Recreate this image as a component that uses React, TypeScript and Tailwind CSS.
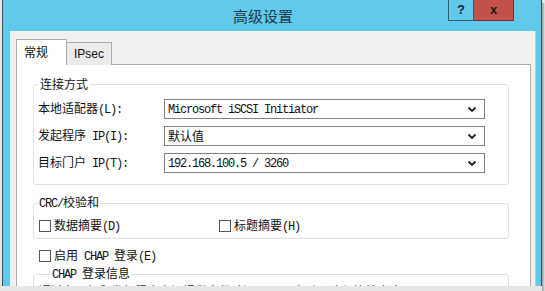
import React from "react";

const M = ({ children }: { children: React.ReactNode }) => (
  <span className="font-['Liberation_Mono',monospace] text-[12px] tracking-[-1.2px]">{children}</span>
);

const Chevron = () => (
  <svg width="10" height="7" viewBox="0 0 10 7">
    <path d="M1.5 1.5 L5 5 L8.5 1.5" fill="none" stroke="#222" strokeWidth="1.8" />
  </svg>
);

const Combo = ({ children }: { children: React.ReactNode }) => (
  <div className="h-[20px] w-[321px] border border-[#828282] bg-white flex items-center justify-between pl-[3px] pr-[7px]">
    <div className="leading-[18px] text-[#111] whitespace-pre">{children}</div>
    <Chevron />
  </div>
);

const Check = ({ children }: { children: React.ReactNode }) => (
  <div className="flex items-center h-[16px]">
    <div className="w-[12px] h-[12px] border border-[#555] bg-white mr-[3px]" />
    <span className="text-[#111] whitespace-pre">{children}</span>
  </div>
);

export default function App() {
  return (
    <div className="w-[545px] h-[291px] overflow-hidden bg-[#e6e6e6] font-['Noto_Sans_CJK_SC',sans-serif] text-[12px] leading-[16px] flex">
      <div className="flex flex-col ml-[2px] w-[543px]">
        <div className="flex">
          {/* window */}
          <div className="w-[540px] h-[286px] border-l border-r border-[#3b4a52] bg-[#61c9e9] flex flex-col">
            {/* title bar */}
            <div className="h-[31px] flex items-start shrink-0">
              <div className="flex-1 text-center pl-[75px] pt-[6px] text-[15px] leading-[20px] text-[#1d3a4c]">高级设置</div>
              <div className="w-[26px] h-[21px] border-l border-b border-r border-[#3e5d6c] flex items-center justify-center font-['Liberation_Sans',sans-serif] font-bold text-[13px] text-[#1a2a33]">?</div>
              <div className="w-[40px] h-[21px] bg-[#c5514b] border-b border-r border-[#6e3330] flex items-center justify-center font-['Liberation_Sans',sans-serif] font-bold text-[13px] text-[#1a1a1a]">x</div>
              <div className="w-[27px]" />
            </div>
            {/* client */}
            <div className="ml-[7px] w-[526px] flex-1 bg-[#f0f0f0] overflow-hidden border-r border-[#c8c8c8] pl-[6px] pt-[8px]">
              {/* tabs */}
              <div className="flex items-end h-[26px]">
                <div className="w-[51px] h-[26px] border-t border-l border-r border-[#adadad] bg-white pl-[7px] pt-[4px] relative z-10 text-[#111]">常规</div>
                <div className="w-[45px] h-[23px] border-t border-r border-[#adadad] bg-[#ececec] pl-[7px] pt-[3px] font-['Liberation_Sans',sans-serif] text-[12px] text-[#111]">IPsec</div>
              </div>
              {/* panel */}
              <div className="-mt-px w-[515px] h-[240px] border border-[#adadad] bg-white pl-[16px] pt-[11px]">
                <fieldset className="w-[476px] border border-[#dbe1e7] rounded-[3px] pl-[4px] pt-[7px] pb-[11px]">
                  <legend className="px-[2px] text-[#111]">连接方式</legend>
                  <div className="flex flex-col gap-[7px]">
                    <div className="flex items-center">
                      <div className="w-[126px] text-[#111] whitespace-pre">本地适配器<M>(L):</M></div>
                      <Combo><M>Microsoft iSCSI Initiator</M></Combo>
                    </div>
                    <div className="flex items-center">
                      <div className="w-[126px] text-[#111] whitespace-pre">发起程序<M> IP(I):</M></div>
                      <Combo>默认值</Combo>
                    </div>
                    <div className="flex items-center">
                      <div className="w-[126px] text-[#111] whitespace-pre">目标门户<M> IP(T):</M></div>
                      <Combo><M>192.168.100.5 / 3260</M></Combo>
                    </div>
                  </div>
                </fieldset>
                <fieldset className="mt-[9px] w-[476px] border border-[#dbe1e7] rounded-[3px] pl-[5px] pt-[6px] pb-[4px]">
                  <legend className="-ml-[1px] px-[1px] text-[#111]"><M>CRC/</M>校验和</legend>
                  <div className="flex">
                    <div className="w-[180px]"><Check>数据摘要<M>(D)</M></Check></div>
                    <Check>标题摘要<M>(H)</M></Check>
                  </div>
                </fieldset>
                <div className="mt-[9px] pl-[6px]">
                  <Check>启用<M> CHAP </M>登录<M>(E)</M></Check>
                </div>
                <fieldset className="mt-[1px] w-[476px] border border-[#dbe1e7] rounded-[3px] pl-[16px] pt-0">
                  <legend className="px-[2px] text-[#111] whitespace-pre"><M>CHAP </M>登录信息</legend>
                  <div className="-ml-[11px] text-[#333]">通过在目标和发起程序之间提供身份验证，<M>CHAP</M> 有助于确保连接安全。</div>
                </fieldset>
              </div>
            </div>
          </div>
          <div className="w-[3px] h-[289px] mt-[3px] bg-gradient-to-r from-[#9a9a9a] to-[#e6e6e6]" />
        </div>
        <div className="h-px w-[540px] bg-[#3b4a52]" />
        <div className="h-[4px] w-[540px] ml-[3px] bg-gradient-to-b from-[#9a9a9a] to-[#e6e6e6]" />
      </div>
    </div>
  );
}
